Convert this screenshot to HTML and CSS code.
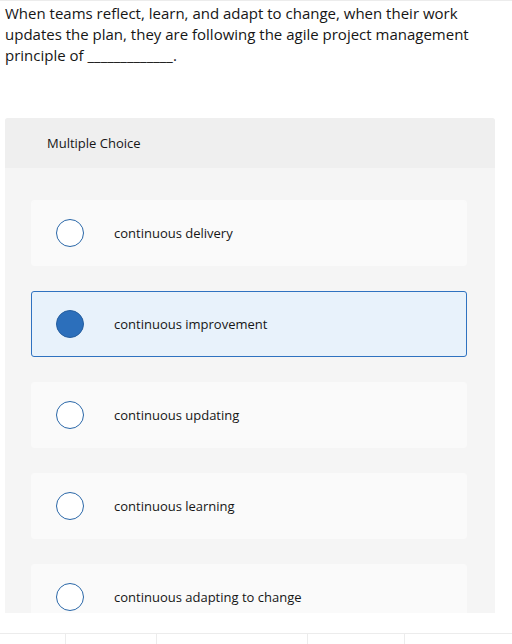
FILE: index.html
```html
<!DOCTYPE html>
<html>
<head>
<meta charset="utf-8">
<link rel="stylesheet" href="styles.css">
</head>
<body>
<div class="page">
  <p class="question">When teams reflect, learn, and adapt to change, when their work updates the plan, they are following the agile project management principle of _____________.</p>
  <section class="panel">
    <div class="panel-head">Multiple Choice</div>
    <div class="options">
      <div class="option"><span class="radio"></span><span class="label">continuous delivery</span></div>
      <div class="option selected"><span class="radio"></span><span class="label">continuous improvement</span></div>
      <div class="option"><span class="radio"></span><span class="label">continuous updating</span></div>
      <div class="option"><span class="radio"></span><span class="label">continuous learning</span></div>
      <div class="option"><span class="radio"></span><span class="label">continuous adapting to change</span></div>
    </div>
  </section>
  <div class="footer">
    <div class="cell c1"></div>
    <div class="cell c2"></div>
    <div class="cell c3"></div>
    <div class="cell c4"></div>
    <div class="cell c5"></div>
  </div>
</div>
</body>
</html>
```

FILE: styles.css
```css
html, body {
  margin: 0;
  padding: 0;
  background: #ffffff;
}
.page {
  width: 512px;
  height: 644px;
  overflow: hidden;
  border-top: 1px solid #ececec;
  box-sizing: border-box;
  font-family: "Open Sans", "Liberation Sans", sans-serif;
  color: #161616;
}
.question {
  margin: 2px 0 0 5px;
  width: 480px;
  font-size: 15px;
  line-height: 21px;
}
.panel {
  margin: 52px 0 0 5px;
  width: 490px;
  height: 495px;
  background: #f5f5f5;
  border-radius: 3px 3px 0 0;
  overflow: hidden;
}
.panel-head {
  height: 50px;
  background: #efefef;
  display: flex;
  align-items: center;
  padding-left: 42px;
  font-size: 13px;
}
.options {
  padding: 32px 0 0 26px;
  display: flex;
  flex-direction: column;
  gap: 25px;
}
.option {
  width: 436px;
  height: 66px;
  box-sizing: border-box;
  background: #fafafa;
  border: 1px solid #fafafa;
  border-radius: 3px;
  display: flex;
  align-items: center;
  padding-left: 24px;
  gap: 30px;
  font-size: 13px;
}
.option.selected {
  background: #e8f2fb;
  border-color: #2f72c0;
}
.radio {
  width: 28px;
  height: 28px;
  box-sizing: border-box;
  border-radius: 50%;
  border: 1.5px solid #2a67a8;
  background: #ffffff;
  flex: none;
}
.selected .radio {
  background: #2c6fbb;
  border-color: #255e9f;
}
.footer {
  margin-top: 20px;
  border-top: 1px solid #ececec;
  height: 11px;
  display: flex;
}
.cell {
  border-right: 1px solid #ececec;
  height: 100%;
}
.c1 { width: 65px; }
.c2 { width: 90px; }
.c3 { width: 150px; }
.c4 { width: 96px; }
.c5 { flex: 1; border-right: none; }
```
